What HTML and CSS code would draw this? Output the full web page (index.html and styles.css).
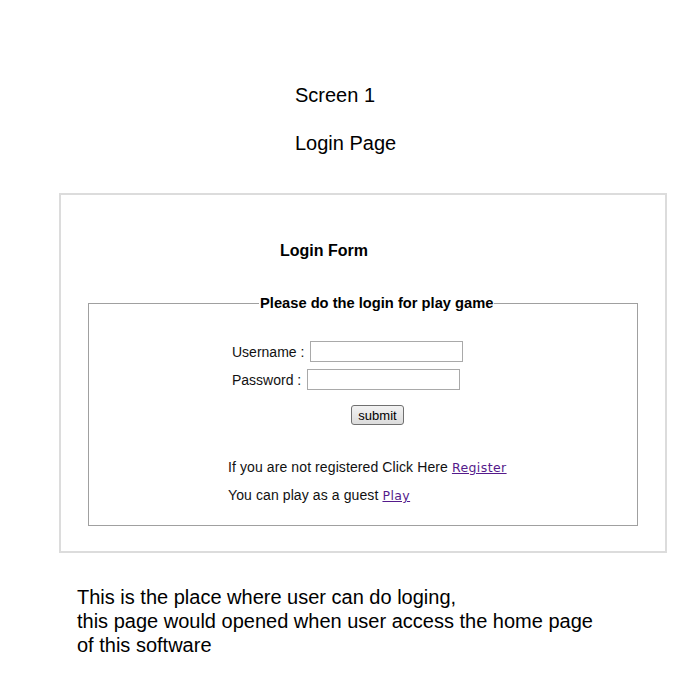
FILE: index.html
```html
<!DOCTYPE html>
<html>
<head>
<meta charset="utf-8">
<link rel="stylesheet" href="styles.css">
</head>
<body>
<div class="titles">
  <div class="title">Screen 1</div>
  <div class="title second">Login Page</div>
</div>
<div class="frame">
  <div class="form-title">Login Form</div>
  <fieldset class="box">
    <legend>Please do the login for play game</legend>
    <div class="row"><label>Username :</label><input class="field" type="text"></div>
    <div class="row"><label>Password :</label><input class="field" type="password"></div>
    <div class="btnrow"><button class="btn">submit</button></div>
    <div class="line first">If you are not registered Click Here <a class="lnk" href="#">Register</a></div>
    <div class="line">You can play as a guest <a class="lnk" href="#">Play</a></div>
  </fieldset>
</div>
<div class="note">
  This is the place where user can do loging,<br>
  this page would opened when user access the home page<br>
  of this software
</div>
</body>
</html>
```
FILE: styles.css
```css
html, body {
  margin: 0;
  padding: 0;
  background: #fff;
  color: #000;
  font-family: "Liberation Sans", Arial, sans-serif;
}
.titles {
  padding: 83px 0 0 295px;
}
.title {
  font-size: 20px;
  line-height: 24px;
}
.title.second {
  margin-top: 24px;
}
.frame {
  box-sizing: border-box;
  margin: 38px 0 0 59px;
  width: 608px;
  height: 360px;
  border: 2px solid #dcdcdc;
  padding: 0 27px;
}
.form-title {
  font-size: 16px;
  font-weight: bold;
  line-height: 20px;
  margin: 46px 0 0 192px;
}
.box {
  box-sizing: border-box;
  margin: 34px 0 0 0;
  height: 231px;
  border: 1px solid #a0a0a0;
  padding: 0;
}
.box legend {
  margin: 0 0 0 170px;
  padding: 0 1px;
  font-size: 14.7px;
  font-weight: bold;
}
.row {
  display: flex;
  align-items: center;
  gap: 6px;
  margin-left: 143px;
  height: 21px;
}
.row:first-of-type {
  margin-top: 30px;
}
.row + .row {
  margin-top: 7px;
}
.row label {
  font-size: 14px;
  color: #111;
}
.field {
  box-sizing: border-box;
  width: 153px;
  height: 21px;
  border: 1px solid #a9a9a9;
  margin: 0;
  padding: 0;
}
.btnrow {
  margin: 15px 0 0 262px;
}
.btn {
  box-sizing: border-box;
  height: 20px;
  width: 53px;
  padding: 0;
  font-family: "Liberation Sans", Arial, sans-serif;
  font-size: 13px;
  color: #000;
  background: linear-gradient(#f2f2f2, #dcdcdc);
  border: 1px solid #707070;
  border-radius: 3px;
}
.line {
  font-size: 14px;
  line-height: 18px;
  margin-left: 139px;
  color: #111;
  letter-spacing: 0.1px;
}
.line.first {
  margin-top: 33px;
}
.line + .line {
  margin-top: 9px;
}
.lnk {
  color: #551a8b;
  font-family: "DejaVu Sans", sans-serif;
  font-size: 12.5px;
  letter-spacing: 0.4px;
}
.note {
  margin: 32px 0 0 77px;
  font-size: 20px;
  line-height: 24px;
}
```
